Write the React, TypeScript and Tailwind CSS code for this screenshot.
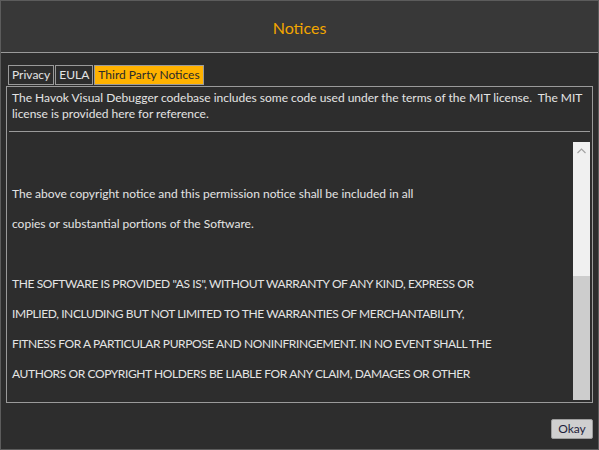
import React, { useState } from 'react';

const tabs = ['Privacy', 'EULA', 'Third Party Notices'];

const licenseLines = [
  '',
  'The above copyright notice and this permission notice shall be included in all',
  'copies or substantial portions of the Software.',
  '',
  'THE SOFTWARE IS PROVIDED "AS IS", WITHOUT WARRANTY OF ANY KIND, EXPRESS OR',
  'IMPLIED, INCLUDING BUT NOT LIMITED TO THE WARRANTIES OF MERCHANTABILITY,',
  'FITNESS FOR A PARTICULAR PURPOSE AND NONINFRINGEMENT. IN NO EVENT SHALL THE',
  'AUTHORS OR COPYRIGHT HOLDERS BE LIABLE FOR ANY CLAIM, DAMAGES OR OTHER',
  'LIABILITY, WHETHER IN AN ACTION OF CONTRACT, TORT OR OTHERWISE, ARISING FROM',
  'OUT OF OR IN CONNECTION WITH THE SOFTWARE OR THE USE OR OTHER DEALINGS IN THE',
];

const App: React.FC = () => {
  const [active, setActive] = useState('Third Party Notices');

  return (
    <div
      className="w-[599px] h-[450px] bg-[#2d2d2d] border border-[#5c5c5c] flex flex-col overflow-hidden"
      style={{ fontFamily: '"Lato", "Liberation Sans", sans-serif' }}
    >
      {/* title bar */}
      <div className="h-[52px] shrink-0 bg-[#383838] border-b border-[#9a9a9a] flex items-center justify-center">
        <span className="text-[16px] text-[#f2a600] pt-[3px]">Notices</span>
      </div>

      <div className="flex-1 flex flex-col px-[5px] pt-[12px]">
        {/* tabs */}
        <div className="flex pl-[2px] h-[20px]">
          {tabs.map((t) => (
            <button
              key={t}
              onClick={() => setActive(t)}
              className={
                t === active
                  ? 'h-[20px] px-[3px] mr-[1px] border border-[#9a9a9a] bg-[#ffb200] text-[#2a2a2a] text-[12px] leading-[18px]'
                  : 'h-[20px] px-[3px] mr-[1px] border border-[#9a9a9a] bg-[#2d2d2d] text-[#e4e4e4] text-[12px] leading-[18px]'
              }
            >
              {t}
            </button>
          ))}
        </div>

        {/* content box */}
        <div className="mt-[1px] h-[317px] border border-[#9a9a9a] flex flex-col">
          <div className="px-[5px] pt-[3px] text-[12px] leading-[16px] text-[#e4e4e4] h-[44px] shrink-0">
            The Havok Visual Debugger codebase includes some code used under the terms of the MIT license.&nbsp; The MIT
            license is provided here for reference.
          </div>
          <div className="mx-[2px] h-px shrink-0 bg-[#9a9a9a]" />

          <div className="flex mt-[10px] h-[258px] shrink-0">
            <div className="flex-1 overflow-hidden pl-[5px]">
              <div className="pt-[7px]">
                {licenseLines.map((l, i) => (
                  <div
                    key={i}
                    className={
                      l === l.toUpperCase()
                        ? 'h-[30px] leading-[30px] text-[12px] text-[#e4e4e4] whitespace-nowrap tracking-[-0.4px]'
                        : 'h-[30px] leading-[30px] text-[12px] text-[#e4e4e4] whitespace-nowrap'
                    }
                  >
                    {l}
                  </div>
                ))}
              </div>
            </div>
            {/* scrollbar */}
            <div className="w-[17px] mr-[2px] bg-[#f0f0f0] flex flex-col">
              <div className="h-[17px] flex items-center justify-center">
                <svg width="9" height="6" viewBox="0 0 9 6">
                  <path d="M0.5 5 L4.5 1 L8.5 5" stroke="#a3a3a3" strokeWidth="1.2" fill="none" />
                </svg>
              </div>
              <div className="flex-1" />
              <div className="h-[124px] bg-[#cdcdcd]" />
            </div>
          </div>
        </div>

        {/* footer */}
        <div className="flex justify-end pt-[16px]">
          <button className="w-[42px] h-[20px] bg-[#cfcfcf] border border-[#9d9d9d] rounded-[2px] text-[12px] leading-[18px] text-[#1e1e3c]">
            Okay
          </button>
        </div>
      </div>
    </div>
  );
};

export default App;
